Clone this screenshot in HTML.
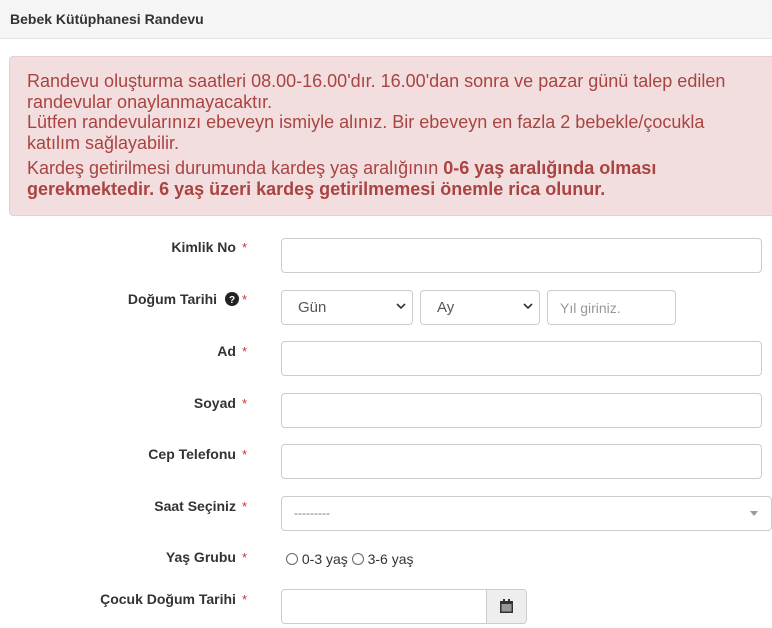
<!DOCTYPE html>
<html><head><meta charset="utf-8"><style>
*{box-sizing:border-box}
body{margin:0;width:772px;height:628px;overflow:hidden;background:#fff;font-family:"Liberation Sans",Arial,sans-serif;color:#333;font-size:14px}
.hd{height:39px;background:#f5f5f5;border-bottom:1px solid #e3e3e3;padding:11px 10px;font-weight:bold;font-size:14px}
.al{position:absolute;left:9px;top:56px;width:775px;height:160px;background:#f2dede;border:1px solid #ebccd1;border-radius:4px;color:#a94442;font-size:18px;line-height:20.5px;padding:14px 17px}
.al p{margin:0;width:735px}
.lb{position:absolute;right:525px;font-weight:bold;font-size:14px;white-space:nowrap}
.lb span{color:#c33;font-weight:normal;margin-left:6px;font-size:13px}
.in{position:absolute;left:281px;width:481px;height:35px;border:1px solid #ccc;border-radius:4px;background:#fff}
.sel{position:absolute;height:35px;border:1px solid #ccc;border-radius:4px;background:#fff;font-size:15px;color:#555;padding:8px 16px}
.chev{position:absolute;right:6px;top:10px}
</style></head><body>
<div class="hd">Bebek Kütüphanesi Randevu</div>
<div class="al"><p>Randevu oluşturma saatleri 08.00-16.00'dır. 16.00'dan sonra ve pazar günü talep edilen randevular onaylanmayacaktır.<br>Lütfen randevularınızı ebeveyn ismiyle alınız. Bir ebeveyn en fazla 2 bebekle/çocukla katılım sağlayabilir.</p><p style="margin-top:5px">Kardeş getirilmesi durumunda kardeş yaş aralığının <b>0-6 yaş aralığında olması gerekmektedir. 6 yaş üzeri kardeş getirilmemesi önemle rica olunur.</b></p></div>

<div class="lb" style="top:239px">Kimlik No<span>*</span></div>
<div class="in" style="top:238px"></div>

<div class="lb" style="top:291px">Doğum Tarihi <svg width="14" height="14" viewBox="0 0 14 14" style="vertical-align:-2px;margin-left:4px"><circle cx="7" cy="7" r="7" fill="#222"/><text x="7" y="11" font-size="10" font-weight="bold" fill="#fff" text-anchor="middle" font-family="Liberation Sans">?</text></svg><span style="margin-left:3px">*</span></div>
<div class="sel" style="top:290px;left:281px;width:132px">Gün<svg class="chev" width="10" height="10" viewBox="0 0 10 10"><path d="M1 3l4 4 4-4" stroke="#333" stroke-width="1.6" fill="none"/></svg></div>
<div class="sel" style="top:290px;left:420px;width:120px">Ay<svg class="chev" width="10" height="10" viewBox="0 0 10 10"><path d="M1 3l4 4 4-4" stroke="#333" stroke-width="1.6" fill="none"/></svg></div>
<div class="sel" style="top:290px;left:547px;width:129px;color:#999;font-size:14px;padding:9px 12px">Yıl giriniz.</div>

<div class="lb" style="top:343px">Ad<span>*</span></div>
<div class="in" style="top:341px"></div>
<div class="lb" style="top:395px">Soyad<span>*</span></div>
<div class="in" style="top:393px"></div>
<div class="lb" style="top:446px">Cep Telefonu<span>*</span></div>
<div class="in" style="top:444px"></div>
<div class="lb" style="top:498px">Saat Seçiniz<span>*</span></div>
<div class="in" style="top:496px;width:491px;color:#777;font-size:12px;padding:9px 12px">---------<svg style="position:absolute;right:13px;top:14px" width="8" height="5"><path d="M0 0h8L4 5z" fill="#999"/></svg></div>

<div class="lb" style="top:549px">Yaş Grubu<span>*</span></div>
<div style="position:absolute;left:286px;top:551px;font-size:14px">
<span style="display:inline-block;width:12px;height:12px;border:1px solid #666;border-radius:50%;vertical-align:-1px"></span> 0-3 yaş <span style="display:inline-block;width:12px;height:12px;border:1px solid #666;border-radius:50%;vertical-align:-1px"></span> 3-6 yaş</div>

<div class="lb" style="top:591px">Çocuk Doğum Tarihi<span>*</span></div>
<div class="in" style="top:589px;width:246px;overflow:hidden"><div style="position:absolute;right:0;top:0;width:40px;height:33px;background:#eee;border-left:1px solid #ccc"><svg style="position:absolute;left:13px;top:9px" width="13" height="14" viewBox="0 0 13 14"><rect x="0" y="2" width="13" height="12" fill="#333"/><rect x="1.5" y="5" width="10" height="7.5" fill="#999"/><rect x="3" y="0" width="2" height="3" fill="#333"/><rect x="8" y="0" width="2" height="3" fill="#333"/></svg></div></div>
</body></html>
